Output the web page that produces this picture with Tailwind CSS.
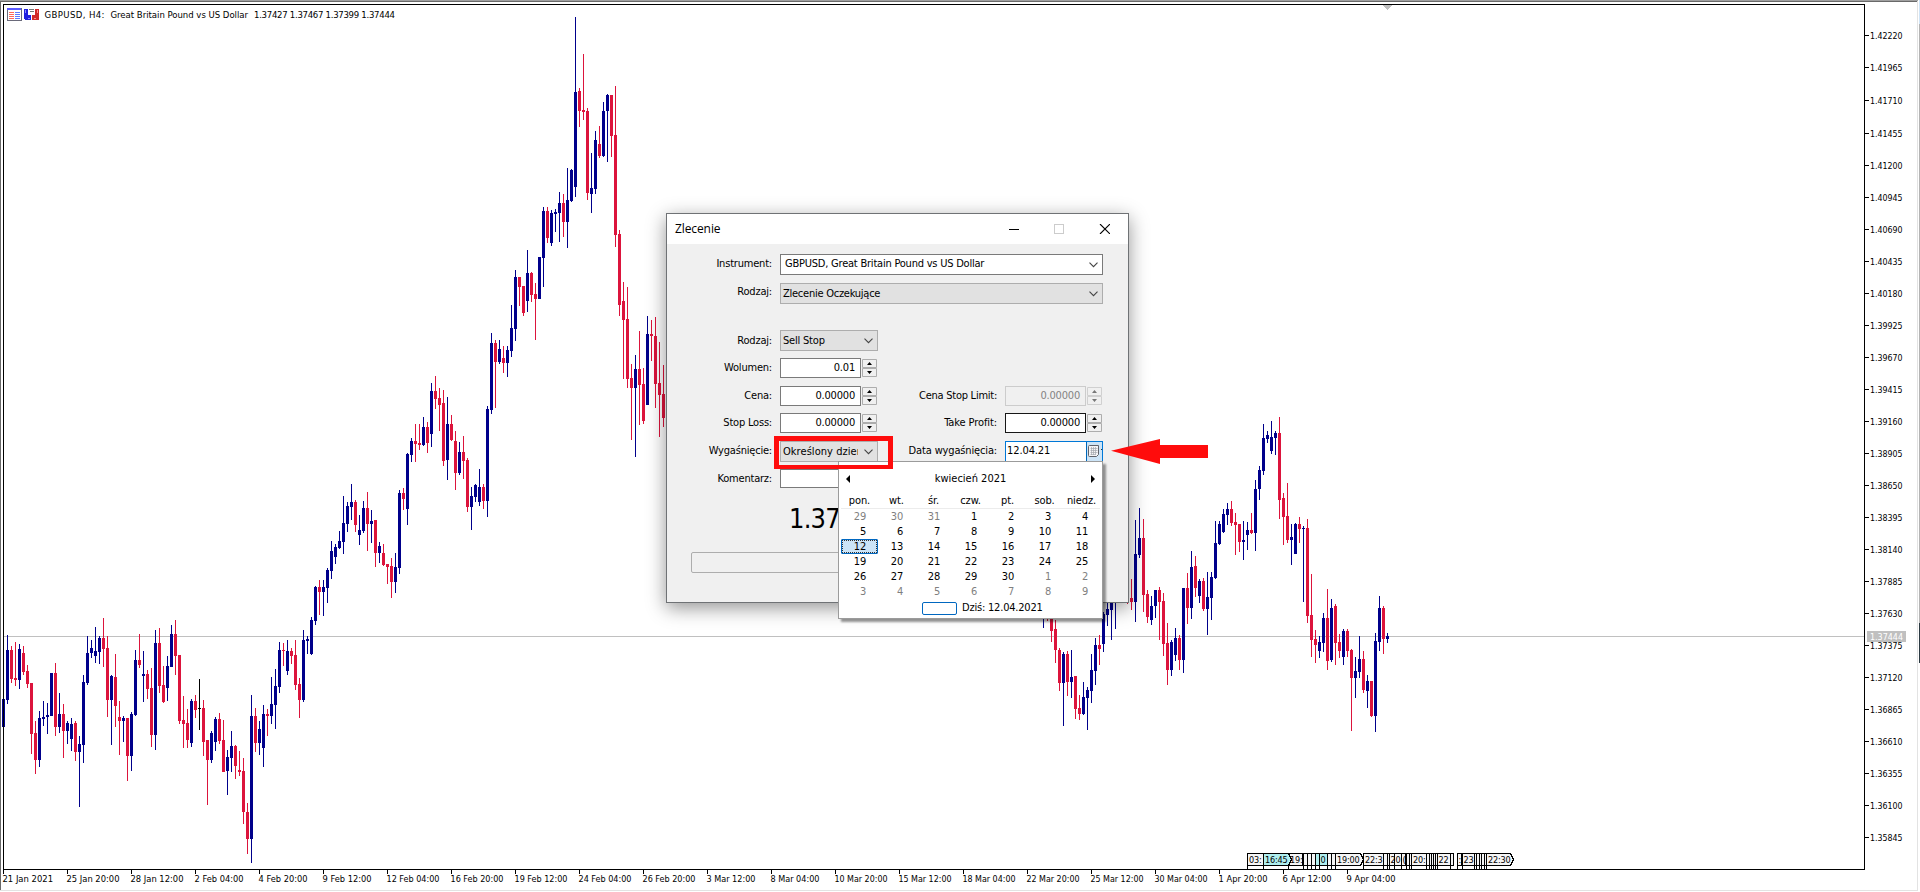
<!DOCTYPE html>
<html lang="pl">
<head>
    <meta charset="UTF-8">
    <meta name="viewport" content="width=device-width, initial-scale=1.0">
    <title>GBPUSD, H4 - Zlecenie</title>
    <!-- Tailwind CSS CDN -->
    <script src="https://cdn.jsdelivr.net/npm/@tailwindcss/browser@4"></script>
</head>
<body class="relative w-[1920px] h-[892px] overflow-hidden bg-white text-black font-['DejaVu_Sans_Condensed','DejaVu_Sans',sans-serif] text-[11px]">

    <!-- Chart -->
    <svg class="block w-[1920px] h-[892px]" viewBox="0 0 1920 892">
        <g shape-rendering="crispEdges">
            <!-- Window frame -->
            <rect x="0" y="0" width="1918" height="1" fill="#a0a0a0"/>
            <rect x="0" y="1" width="1917" height="1" fill="#696969"/>
            <rect x="0" y="1" width="1" height="889" fill="#696969"/>
            <rect x="0" y="890" width="1918" height="1" fill="#e3e3e3"/>
            <rect x="1917" y="1" width="1" height="890" fill="#e3e3e3"/>
            <rect x="1919" y="0" width="1" height="24" fill="#cfe4f7"/>
            <rect x="1919" y="24" width="1" height="599" fill="#b4b4b4"/>
            <rect x="1919" y="623" width="1" height="40" fill="#2b3a42"/>
            <!-- Current price line -->
            <rect x="4" y="636" width="1860" height="1" fill="#c0c0c0"/>
            <g id="candles"></g>
            <g id="ticks" fill="#000"></g>
            <!-- Chart border -->
            <path d="M3.5 869.5V4.5H1864.5V869.5Z" fill="none" stroke="#000"/>
            <path d="M1382 5h11l-5.500 5z" fill="#c0c0c0"/>
            <g id="flags"></g>
        </g>
        <g id="labels" font-size="9.500"></g>
        <rect x="1867" y="631" width="39" height="11" fill="#c0c0c0"/>
        <text x="1870" y="640" font-size="9.500" fill="#fff" textLength="33" lengthAdjust="spacingAndGlyphs">1.37444</text>

        <!-- Header -->
        <g font-size="9.500">
            <text x="44.500" y="18" textLength="60">GBPUSD, H4:</text>
            <text x="110.500" y="18" textLength="137.500">Great Britain Pound vs US Dollar</text>
            <text x="254" y="18" textLength="141">1.37427 1.37467 1.37399 1.37444</text>
        </g>
        <g shape-rendering="crispEdges">
            <rect x="7" y="8" width="15" height="13" fill="#6a6a7a"/>
            <rect x="7" y="8" width="14" height="2" fill="#5b5bff"/>
            <rect x="8" y="10" width="13" height="10" fill="#fff"/>
            <path d="M9 12.500h5M9 14.500h5M9 16.500h5M9 18.500h5" stroke="#ff6a5a"/>
            <path d="M15 12.500h5M15 14.500h5M15 16.500h5M15 18.500h5" stroke="#5b7dff"/>
            <path d="M24 9h4v6h3v5H25l-1-1z" fill="#2020e0"/>
            <path d="M35 9h4v10l-1 1h-6v-5h3z" fill="#d02828"/>
            <path d="M29 9.500h5M30 11.500h4" stroke="#777"/>
            <path d="M25.500 10v3M28 18.500h2" stroke="#8a8aff"/>
            <path d="M37.500 10v3M34 18.500h2" stroke="#ff8a8a"/>
        </g>
    </svg>

    <!-- Order window -->
    <div class="absolute left-[666px] top-[213px] w-[463px] h-[390px] flex flex-col border border-[#6f7275] bg-[#f0f0f0] shadow-[0_5px_18px_rgba(0,0,0,0.42)]">
        <div class="flex items-center h-[30px] bg-white pl-2 pr-[18px] shrink-0">
            <span class="grow font-['Open_Sans',sans-serif] text-[12px] tracking-[-0.1px]">Zlecenie</span>
            <svg class="w-[101px] h-[10px] -mt-px" viewBox="0 0 101 10" fill="none">
                <path d="M0 5.500h10" stroke="#000"/>
                <rect x="45.500" y=".5" width="9" height="9" stroke="#ccc"/>
                <path d="M91 0l10 10M101 0l-10 10" stroke="#000" stroke-width="1.100"/>
            </svg>
        </div>

        <div class="flex flex-col pt-[10px]">
            <div class="flex items-center h-[21px]">
                <label class="w-[106px] pr-px text-right tracking-[-0.2px]">Instrument:</label>
                <div class="ml-[7px] w-[323px] h-[21px] flex items-center justify-between border border-[#7a7a7a] bg-white pl-1 pr-1">
                    <span class="tracking-[-0.22px]">GBPUSD, Great Britain Pound vs US Dollar</span>
                    <svg class="w-[9px] h-[6px]" viewBox="0 0 9 6"><path d="M.5 .7l4 4 4-4" fill="none" stroke="#444" stroke-width="1.100"/></svg>
                </div>
            </div>
            <div class="flex items-center h-[21px] mt-2">
                <label class="w-[106px] pr-px pb-[2px] text-right tracking-[-0.2px]">Rodzaj:</label>
                <div class="ml-[7px] w-[323px] h-[21px] flex items-center justify-between border border-[#adadad] bg-[#e1e1e1] pl-[2px] pr-1">
                    <span class="pt-[2px] tracking-[-0.25px]">Zlecenie Oczekujące</span>
                    <svg class="w-[9px] h-[6px]" viewBox="0 0 9 6"><path d="M.5 .7l4 4 4-4" fill="none" stroke="#444" stroke-width="1.100"/></svg>
                </div>
            </div>
            <div class="flex items-center h-[21px] mt-[26px]">
                <label class="w-[106px] pr-px pt-[2px] text-right tracking-[-0.2px]">Rodzaj:</label>
                <div class="ml-[7px] w-[98px] h-[21px] flex items-center justify-between border border-[#adadad] bg-[#e1e1e1] pl-[2px] pr-1">
                    <span class="pt-[2px] tracking-[-0.2px]">Sell Stop</span>
                    <svg class="w-[9px] h-[6px]" viewBox="0 0 9 6"><path d="M.5 .7l4 4 4-4" fill="none" stroke="#444" stroke-width="1.100"/></svg>
                </div>
            </div>
            <div class="flex items-center h-[20px] mt-[7px]">
                <label class="w-[106px] pr-px text-right tracking-[-0.2px]">Wolumen:</label>
                <div class="ml-[7px] w-[81px] h-[20px] flex items-center justify-end border border-[#7a7a7a] bg-white pr-[5px] tracking-[-0.2px]">0.01</div>
                <svg class="ml-px w-[15px] h-[18px]" viewBox="0 0 15 18"><path d="M.5 .5h14v8H.5zM.5 9.500h14v8H.5z" fill="#f0f0f0" stroke="#adadad"/><path d="M5 6h5L7.500 3zM5 12h5l-2.500 3z"/></svg>
            </div>
            <div class="flex items-center h-[20px] mt-2">
                <label class="w-[106px] pr-px pt-px text-right tracking-[-0.2px]">Cena:</label>
                <div class="ml-[7px] w-[81px] h-[20px] flex items-center justify-end border border-[#7a7a7a] bg-white pr-[5px] pt-px tracking-[-0.2px]">0.00000</div>
                <svg class="ml-px w-[15px] h-[18px]" viewBox="0 0 15 18"><path d="M.5 .5h14v8H.5zM.5 9.500h14v8H.5z" fill="#f0f0f0" stroke="#adadad"/><path d="M5 6h5L7.500 3zM5 12h5l-2.500 3z"/></svg>
                <label class="w-[121px] pr-px pt-px text-right tracking-[-0.25px]">Cena Stop Limit:</label>
                <div class="ml-[7px] w-[81px] h-[20px] flex items-center justify-end border border-[#ccc] bg-[#f0f0f0] pr-[5px] pt-px text-[#838383] tracking-[-0.2px]">0.00000</div>
                <svg class="ml-px w-[15px] h-[18px]" viewBox="0 0 15 18"><path d="M.5 .5h14v8H.5zM.5 9.500h14v8H.5z" fill="#f0f0f0" stroke="#d0d0d0"/><path d="M5 6h5L7.500 3zM5 12h5l-2.500 3z" fill="#777"/></svg>
            </div>
            <div class="flex items-center h-[20px] mt-[7px]">
                <label class="w-[106px] pr-px pt-px text-right tracking-[-0.2px]">Stop Loss:</label>
                <div class="ml-[7px] w-[81px] h-[20px] flex items-center justify-end border border-[#7a7a7a] bg-white pr-[5px] pt-px tracking-[-0.2px]">0.00000</div>
                <svg class="ml-px w-[15px] h-[18px]" viewBox="0 0 15 18"><path d="M.5 .5h14v8H.5zM.5 9.500h14v8H.5z" fill="#f0f0f0" stroke="#adadad"/><path d="M5 6h5L7.500 3zM5 12h5l-2.500 3z"/></svg>
                <label class="w-[121px] pr-px pt-px text-right tracking-[-0.1px]">Take Profit:</label>
                <div class="ml-[7px] w-[81px] h-[20px] flex items-center justify-end border border-[#171717] bg-white pr-[5px] pt-px tracking-[-0.2px]">0.00000</div>
                <svg class="ml-px w-[15px] h-[18px]" viewBox="0 0 15 18"><path d="M.5 .5h14v8H.5zM.5 9.500h14v8H.5z" fill="#f0f0f0" stroke="#adadad"/><path d="M5 6h5L7.500 3zM5 12h5l-2.500 3z"/></svg>
            </div>
            <div class="flex items-center h-[21px] mt-2">
                <label class="w-[106px] pr-px text-right tracking-[-0.2px]">Wygaśnięcie:</label>
                <div class="ml-[7px] w-[98px] h-[21px] flex items-center justify-between border border-[#adadad] bg-[#e1e1e1] pl-[2px] pr-1">
                    <span class="w-[75px] pt-[2px] overflow-hidden whitespace-nowrap tracking-[0.05px]">Określony dzień</span>
                    <svg class="w-[9px] h-[6px]" viewBox="0 0 9 6"><path d="M.5 .7l4 4 4-4" fill="none" stroke="#444" stroke-width="1.100"/></svg>
                </div>
                <label class="w-[120px] pr-px text-right tracking-[-0.15px]">Data wygaśnięcia:</label>
                <div class="ml-[7px] w-[98px] h-[21px] flex items-center justify-between border border-[#0078d7] bg-white pl-px">
                    <span class="tracking-[-0.1px]">12.04.21</span>
                    <svg class="w-[16px] h-[19px]" viewBox="0 0 16 19">
                        <path d="M0 0h16v19H0z" fill="#cce4f7"/>
                        <path d="M.5 0v19" stroke="#0067b8"/>
                        <path d="M3.500 3.500h9v9l-2 2h-7a1 1 0 0 1-1-1v-9a1 1 0 0 1 1-1z" fill="#f4f4f6" stroke="#5f626a"/>
                        <path d="M4.500 6.500h7M4.500 8.500h7M4.500 10.500h7M4.500 12.500h5M5.500 5v8M7.500 5v8M9.500 5v8" stroke="#a3a7af" stroke-width=".7"/>
                        <path d="M15 7h1v1h-1z" fill="#333"/>
                    </svg>
                </div>
            </div>
            <div class="flex items-center h-[19px] mt-[7px]">
                <label class="w-[106px] pr-px pt-[2px] text-right tracking-[-0.2px]">Komentarz:</label>
                <div class="ml-[7px] w-[323px] h-[19px] border border-[#7a7a7a] bg-white"></div>
            </div>
            <div class="h-[64px] pl-[122px] pt-[12px] text-[27px] leading-[38px] tracking-[-0.8px]">1.37</div>
            <div class="ml-[24px] w-[412px] h-[21px] rounded-[2px] border border-[#adadad]"></div>
        </div>
    </div>

    <!-- Date picker drop-down -->
    <div class="absolute left-[838px] top-[461px] w-[265px] h-[158px] flex flex-col border border-[#9b9b9b] bg-white shadow-[3px_3px_2px_rgba(0,0,0,0.4)]">
        <div class="flex items-center justify-between h-[33px] px-[7px]">
            <svg class="w-[4px] h-[8px]" viewBox="0 0 4 8"><path d="M4 0v8L0 4z"/></svg>
            <span class="pt-[2px]">kwiecień 2021</span>
            <svg class="w-[4px] h-[8px]" viewBox="0 0 4 8"><path d="M0 0v8l4-4z"/></svg>
        </div>
        <div class="ml-[2px] w-[259px] grid grid-cols-7 h-[14px] border-b border-[#ececec] leading-[12px] text-center tracking-[-0.1px]">
            <span>pon.</span><span>wt.</span><span>śr.</span><span>czw.</span><span>pt.</span><span>sob.</span><span>niedz.</span>
        </div>
        <div id="days" class="ml-[2px] w-[259px] grid grid-cols-7 leading-[15px] text-right tracking-[-0.2px]"></div>
        <div class="flex items-center pl-[83px] h-[18px] gap-[5px]">
            <div class="w-[35px] h-[13px] rounded-[2px] border border-[#0067c0]"></div>
            <span class="pt-px tracking-[-0.2px]">Dziś: 12.04.2021</span>
        </div>
    </div>

    <!-- Highlight and arrow -->
    <div class="absolute left-[774px] top-[436px] w-[119px] h-[33px] border-[5px] border-b-4 border-[#ff0c0c]"></div>
    <svg class="absolute left-[1111px] top-[438px] w-[98px] h-[27px]" viewBox="0 0 98 27"><path d="M0 12.700L49 1v6h48v13H49v6z" fill="#ff0c0c"/></svg>

    <script>
        // Candles: x, high, body top, body bottom, low, direction
        const candles = `3 699 699 727 727 B|7 635 650 700 704 B|11 646 650 679 683 R|15 642 678 680 686 R|19 644 649 680 689 B|23 646 653 672 675 R|27 665 671 684 688 R|31 683 683 734 754 R|35 721 733 760 774 R|39 711 718 760 767 B|43 701 717 719 726 B|47 703 715 717 734 B|51 673 673 716 716 B|55 663 673 727 736 R|59 693 714 727 733 B|63 704 714 731 758 R|67 721 723 731 744 B|71 718 724 739 751 B|75 721 723 752 761 R|79 736 744 752 807 B
83 675 682 745 763 B|87 636 653 683 685 B|91 640 648 653 658 B|95 627 651 656 663 B|99 636 638 652 664 B|103 618 638 649 667 R|107 636 648 700 717 R|111 675 676 700 745 B|115 654 677 706 727 R|119 701 717 721 755 R|123 716 718 721 742 B|127 718 718 756 781 R|131 712 714 756 771 B|135 650 660 715 716 B|139 634 660 665 668 R|143 651 674 676 702 B|147 670 674 689 699 R|151 668 688 735 747 R|155 630 643 735 750 B|159 628 643 686 693 R
163 666 685 702 703 R|167 656 666 688 701 B|171 625 634 667 667 B|175 620 634 656 675 R|179 655 655 721 724 R|183 696 720 724 748 R|187 709 723 740 748 R|191 699 701 743 747 B|195 695 701 710 718 R|199 679 708 709 730 K|203 700 708 742 756 R|207 740 740 760 805 R|211 731 733 760 763 B|215 717 719 742 751 B|219 713 719 741 744 R|223 720 740 772 772 R|227 750 757 771 795 B|231 731 746 758 772 B|235 745 746 766 779 R|239 751 770 772 776 R
243 758 771 812 824 R|247 803 812 839 854 R|251 695 716 839 863 B|255 708 716 743 752 R|259 721 729 743 755 B|263 705 714 748 767 B|267 709 714 716 736 R|271 677 704 716 724 B|275 669 686 705 729 B|279 642 650 687 693 B|283 643 650 651 666 R|287 640 651 671 675 B|291 648 651 656 664 R|295 640 655 685 690 R|299 678 684 700 718 R|303 630 640 700 702 B|307 636 639 641 654 B|311 617 620 654 655 B|315 586 587 621 625 B|319 580 587 592 615 R
323 580 587 592 616 B|327 568 570 588 603 B|331 541 551 571 579 B|335 544 547 557 564 B|339 531 541 548 549 B|343 496 523 542 554 B|347 502 506 524 532 B|351 484 502 507 520 B|355 500 502 525 532 R|359 515 530 535 545 B|363 501 508 531 533 B|367 492 508 524 551 R|371 510 521 524 543 B|375 520 520 553 567 R|379 542 546 553 563 B|383 544 553 565 566 R|387 564 564 567 584 R|391 558 566 582 598 R|395 553 567 582 593 B|399 490 493 568 574 B
403 488 493 499 510 R|407 453 454 509 525 B|411 438 441 455 462 B|415 424 441 444 462 R|419 424 443 445 450 R|423 417 427 445 446 B|427 422 427 443 453 R|431 383 391 434 447 B|435 376 391 399 409 R|439 388 398 405 431 R|443 390 403 461 466 R|447 397 424 460 480 B|451 415 424 440 441 R|455 431 441 473 490 R|459 442 452 473 475 B|463 436 452 461 479 R|467 458 460 507 512 R|471 487 496 507 530 B|475 484 485 497 502 B|479 469 487 502 506 B
483 484 487 501 509 R|487 406 409 501 517 B|491 333 343 410 414 B|495 340 343 362 408 R|499 340 349 362 364 B|503 346 358 363 373 R|507 346 350 363 377 B|511 305 328 351 357 B|515 270 277 329 341 B|519 277 277 287 306 R|523 286 286 313 316 R|527 250 273 301 312 B|531 272 273 295 302 R|535 283 294 299 340 R|539 257 257 299 299 B|543 207 211 258 287 B|547 207 211 238 243 R|551 210 213 243 246 B|555 209 212 214 232 B|559 192 203 213 242 B
563 194 203 222 237 R|567 168 200 222 248 B|571 169 170 201 202 B|575 17 92 187 197 B|579 88 91 111 127 R|583 54 110 112 120 R|587 108 111 193 200 R|591 153 188 194 213 B|595 131 140 189 194 B|599 126 144 156 158 R|603 102 111 156 157 B|607 94 95 111 162 B|611 95 95 136 157 R|615 86 135 235 247 R|619 230 234 305 316 R|623 282 301 320 379 R|627 287 319 379 388 R|631 364 378 388 440 R|635 355 369 388 457 B|639 331 369 385 425 R
643 368 384 421 424 R|647 316 334 405 405 B|651 320 334 336 361 R|655 317 336 384 408 R|659 342 383 395 437 R|663 365 394 418 427 R|667 408 408 418 418 B
1043 600 600 601 628 B|1047 600 600 612 621 R|1051 600 610 631 642 R|1055 620 629 650 663 R|1059 648 650 683 691 R|1063 652 654 683 726 B|1067 651 654 682 696 R|1071 650 677 682 698 B|1075 676 676 709 719 R|1079 695 708 714 720 R|1083 682 697 714 715 B|1087 687 690 698 730 B|1091 654 670 691 703 B|1095 638 645 671 685 B|1099 635 645 649 665 R|1103 612 614 644 652 B|1107 600 609 615 626 B|1111 600 600 610 640 B|1115 590 590 600 629 B|1127 580 590 600 604 R
1131 579 598 602 610 R|1135 520 554 602 622 B|1139 508 538 555 558 B|1143 519 538 595 612 R|1147 590 594 617 623 R|1151 596 606 620 625 B|1155 590 590 606 618 B|1159 587 590 602 640 R|1163 593 601 644 656 R|1167 623 643 670 685 R|1171 640 642 670 676 B|1175 628 638 655 661 B|1179 635 638 660 670 R|1183 588 588 660 673 B|1187 573 588 608 624 R|1191 551 567 608 619 B|1195 556 566 588 597 R|1199 579 581 596 603 B|1203 578 581 609 611 R|1207 572 597 609 635 B
1211 572 577 598 620 B|1215 521 543 578 579 B|1219 521 524 544 545 B|1223 509 514 532 533 B|1227 503 509 515 525 B|1231 501 509 523 526 R|1235 513 522 525 555 R|1239 524 524 542 552 R|1243 521 540 542 560 B|1247 522 530 535 550 B|1251 513 530 533 534 R|1255 480 489 533 551 B|1259 466 470 489 500 B|1263 424 438 471 475 B|1267 431 435 439 443 B|1271 421 437 451 454 B|1275 431 433 438 455 B|1279 417 433 500 519 R|1283 493 498 517 545 R|1287 483 516 540 543 R
1291 524 537 540 565 B|1295 523 524 554 554 B|1299 517 524 529 543 R|1303 526 528 529 602 B|1307 519 528 616 623 R|1311 574 615 640 657 R|1315 630 639 645 663 R|1319 636 642 651 658 B|1323 613 618 643 652 B|1327 589 618 661 670 R|1331 599 608 660 662 B|1335 604 606 643 665 R|1339 634 642 651 658 R|1343 629 631 657 665 B|1347 629 631 651 657 R|1351 649 650 678 731 R|1355 657 671 678 698 B|1359 636 659 672 678 B|1363 651 659 690 693 R|1367 675 681 691 708 B
1371 681 681 716 717 R|1375 633 641 716 732 B|1379 596 608 642 651 B|1383 606 608 639 654 R|1387 633 636 639 643 B`;
        const colors = { B: '#00008b', R: '#dc143c', K: '#000' };
        document.getElementById('candles').innerHTML = candles.split(/[|\n]/).map(row => {
            const [x, h, t, b, l, dir] = row.trim().split(' ');
            return `<path fill="${colors[dir]}" d="M${x} ${h}h1V${l}h-1zM${x - 1} ${t}h3V${b}h-3z"/>`;
        }).join('');

        // Axes
        let ticks = '';
        let labels = '';
        for (let i = 0; i < 26; i++) {
            const y = i < 2 ? 35 + i * 32 : i === 2 ? 100 : 101 + (i - 2) * 32;
            ticks += `<rect x="1865" y="${y}" width="4" height="1"/>`;
            labels += `<text x="1870" y="${y + 4}" textLength="32.500" lengthAdjust="spacingAndGlyphs">${(1.4222 - i * 0.00255).toFixed(5)}</text>`;
        }
        const dates = ['21 Jan 2021', '25 Jan 20:00', '28 Jan 12:00', '2 Feb 04:00', '4 Feb 20:00', '9 Feb 12:00', '12 Feb 04:00', '16 Feb 20:00',
            '19 Feb 12:00', '24 Feb 04:00', '26 Feb 20:00', '3 Mar 12:00', '8 Mar 04:00', '10 Mar 20:00', '15 Mar 12:00', '18 Mar 04:00',
            '22 Mar 20:00', '25 Mar 12:00', '30 Mar 04:00', '1 Apr 20:00', '6 Apr 12:00', '9 Apr 04:00'];
        dates.forEach((date, i) => {
            const x = 3 + i * 64;
            ticks += `<rect x="${x}" y="870" width="1" height="4"/>`;
            labels += `<text x="${x - 0.5}" y="882" textLength="${date.length > 11 ? 53 : date.includes('2021') ? 50.5 : 49}" lengthAdjust="spacingAndGlyphs">${date}</text>`;
        });
        document.getElementById('ticks').innerHTML = ticks;
        document.getElementById('labels').innerHTML = labels;

        // News flags: x, width, text, fill
        const flags = [[1247, 16, '03:'], [1288, 14, '19:'], [1263, 27, '16:45', '#afeeee', 1], [1303, 4, ''], [1307, 4, ''], [1311, 4, ''], [1315, 4, '', '#afeeee'],
            [1319, 8, '0', '#afeeee'], [1327, 4, ''], [1331, 4, ''], [1363, 20, '22:3'], [1335, 27, '19:00', '#f5f5f5', 1], [1383, 4, ''], [1387, 3, ''],
            [1389, 5, '2'], [1394, 7, '0'], [1401, 4, '('], [1406, 3, ''], [1409, 2, ''], [1411, 15, '20:'], [1426, 3, ''], [1429, 2, ''], [1431, 2, ''],
            [1433, 2, ''], [1435, 2, ''], [1437, 13, '22'], [1450, 3, ''], [1457, 4, ':'], [1462, 12, '23'], [1474, 2, ''], [1476, 3, ''], [1479, 2, ''],
            [1481, 3, ''], [1484, 2, ''], [1486, 26, '22:30', '#f5f5f5', 1]];
        document.getElementById('flags').innerHTML = flags.map(([x, w, text, fill = '#f5f5f5', tip]) => {
            const end = tip ? `h${w - 2}l3 6l-3 6` : `h${w}v12`;
            return `<path d="M${x + 0.5} 853.5${end}H${x + 0.5}" fill="${fill}" stroke="#000"/><path d="M${x + 0.5} 853v16" stroke="#000"/>` +
                (text ? `<text x="${x + (text.length < 3 ? 1.5 : 2)}" y="863" font-size="9" letter-spacing="-.15">${text}</text>` : '');
        }).join('');

        // Calendar days, 29 March - 9 May
        const days = [29, 30, 31];
        for (let d = 1; d <= 30; d++) days.push(d);
        for (let d = 1; d <= 9; d++) days.push(d);
        document.getElementById('days').innerHTML = days.map((d, i) => {
            if (i === 14) return `<span class="relative h-[15px] pr-[11px] leading-[14px] border border-[#0067c0] rounded-[1px] bg-[#cce4f7] outline-1 outline-dotted outline-[#333] -outline-offset-2">${d}</span>`;
            return `<span class="h-[15px] pr-[12px] leading-[16px] ${i < 3 || i > 32 ? 'text-[#7f7f7f]' : ''}">${d}</span>`;
        }).join('');
    </script>
</body>
</html>
